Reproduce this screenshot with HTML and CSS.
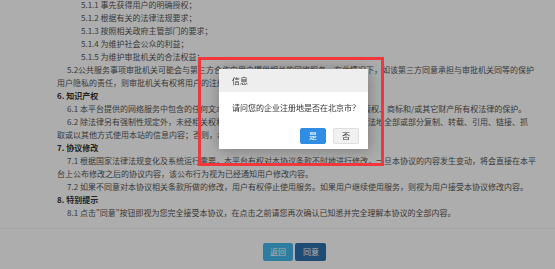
FILE: index.html
```html
<!DOCTYPE html>
<html lang="zh-CN">
<head>
  <meta charset="UTF-8" />
  <title>用户协议</title>
  <link rel="stylesheet" href="styles.css">
</head>
<body>
  <div class="agreement">
    <p class="sub">5.1.1 事先获得用户的明确授权；</p>
    <p class="sub">5.1.2 根据有关的法律法规要求；</p>
    <p class="sub">5.1.3 按照相关政府主管部门的要求；</p>
    <p class="sub">5.1.4 为维护社会公众的利益；</p>
    <p class="sub">5.1.5 为维护审批机关的合法权益；</p>
    <p class="para">5.2公共服务事项审批机关可能会与第三方合作向用户提供相关的网络服务，在此情况下，如该第三方同意承担与审批机关同等的保护<br>用户隐私的责任，则审批机关有权将用户的注册资料等提供给该第三方。</p>
    <h3>6. 知识产权</h3>
    <p class="para">6.1 本平台提供的网络服务中包含的任何文本、图片、图形、音频和/或视频资料均受版权、商标和/或其它财产所有权法律的保护。</p>
    <p class="para">6.2 除法律另有强制性规定外，未经相关权利人的书面许可，任何人不得以任何方式非法地全部或部分复制、转载、引用、链接、抓<br>取或以其他方式使用本站的信息内容；否则，本平台有权追究其法律责任。</p>
    <h3>7. 协议修改</h3>
    <p class="para">7.1 根据国家法律法规变化及系统运行需要，本平台有权对本协议条款不时地进行修改，一旦本协议的内容发生变动，将会直接在本平<br>台上公布修改之后的协议内容，该公布行为视为已经通知用户修改内容。</p>
    <p class="para">7.2 如果不同意对本协议相关条款所做的修改，用户有权停止使用服务。如果用户继续使用服务，则视为用户接受本协议修改内容。</p>
    <h3>8. 特别提示</h3>
    <p class="para">8.1 点击"同意"按钮即视为您完全接受本协议，在点击之前请您再次确认已知悉并完全理解本协议的全部内容。</p>
  </div>

  <div class="footer">
    <div class="footer-btns">
      <button class="btn btn-back">返回</button>
      <button class="btn btn-agree">同意</button>
    </div>
  </div>

  <!-- 弹层遮罩 -->
  <div class="shade"></div>

  <div class="dialog">
    <div class="dialog-title">信息</div>
    <div class="dialog-content">请问您的企业注册地是否在北京市？</div>
    <div class="dialog-btns">
      <button class="dbtn dbtn-yes">是</button>
      <button class="dbtn dbtn-no">否</button>
    </div>
  </div>

  <div class="highlight"></div>
</body>
</html>
```

FILE: styles.css
```css
body {
  margin: 0;
  background-color: #fff;
  color: #555;
  font-family: "Noto Sans CJK SC", "Noto Sans", sans-serif;
  font-size: 8px;
  line-height: 13px;
  overflow: hidden;
}

.agreement {
  margin-top: -2px;
  padding-left: 57px;
  width: 475px;
  white-space: nowrap;
}

.agreement p,
.agreement h3 {
  margin: 0;
  font-size: 8px;
  line-height: 13px;
}

.agreement h3 {
  font-weight: bold;
  color: #333;
}

.sub {
  padding-left: 24px;
}

.para {
  text-indent: 10px;
}

.footer {
  margin-top: 9px;
  border-top: 1px solid #f0f0f0;
  padding-top: 14px;
}

.footer-btns {
  margin-left: 57px;
  width: 475px;
  display: flex;
  justify-content: center;
  gap: 2px;
}

.btn {
  height: 18px;
  padding: 0 7px;
  border: none;
  border-radius: 2px;
  color: #fff;
  font-family: inherit;
  font-size: 8px;
  line-height: 18px;
}

.btn-back {
  background-color: #45b9ee;
}

.btn-agree {
  background-color: #2e70ab;
  padding: 0 7px 0 8px;
}

.shade {
  position: fixed;
  inset: 0;
  background-color: rgba(0, 0, 0, 0.32);
}

.dialog {
  position: absolute;
  left: 219px;
  top: 69px;
  width: 149px;
  background-color: #fff;
  box-shadow: 1px 1px 14px rgba(0, 0, 0, 0.3);
  color: #333;
}

.dialog-title {
  height: 23px;
  line-height: 23px;
  padding-left: 13px;
  background-color: #eeeeee;
}

.dialog-content {
  padding: 9px 12px 0 13px;
  line-height: 13px;
  white-space: nowrap;
}

.dialog-btns {
  display: flex;
  justify-content: flex-end;
  gap: 7px;
  margin-top: 14px;
  padding: 0 9px 5px 0;
}

.dbtn {
  width: 26px;
  height: 16px;
  padding: 0;
  border-radius: 2px;
  font-family: inherit;
  font-size: 8px;
  line-height: 14px;
}

.dbtn-yes {
  background-color: #2f8de6;
  border: 1px solid #2f8de6;
  color: #fff;
}

.dbtn-no {
  background-color: #f1f1f1;
  border: 1px solid #dedede;
  color: #333;
}

.highlight {
  position: absolute;
  left: 198px;
  top: 57px;
  width: 186px;
  height: 109px;
  box-sizing: border-box;
  border: 3px solid #f0383c;
}
```
